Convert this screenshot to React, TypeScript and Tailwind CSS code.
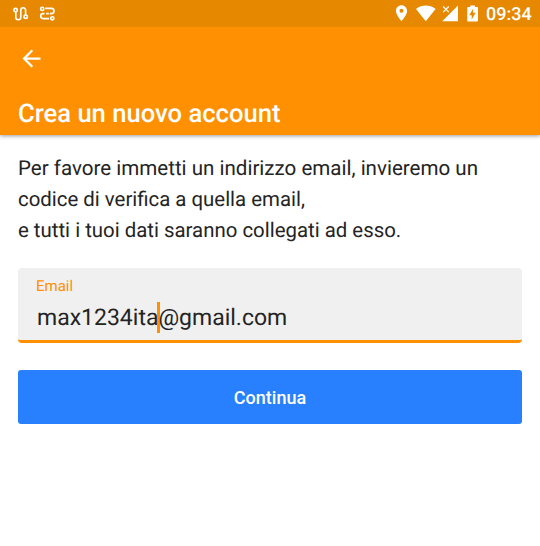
function StatusBar() {
  return (
    <div className="flex h-[27px] items-start bg-[#e68900]">
      <svg width="60" height="27" viewBox="0 0 60 27" fill="none" stroke="white" strokeWidth="1.6">
        <circle cx="15.6" cy="10.1" r="1.7" />
        <path d="M15.8 11.8V17.3a2.5 2.5 0 0 0 5 0V10.2a2.4 2.4 0 0 1 4.8 0V15" />
        <circle cx="25.7" cy="16.7" r="1.7" />
        <circle cx="42.2" cy="8.9" r="1.6" />
        <path d="M45.2 8.4h6.2a2.6 2.6 0 0 1 0 5.2h-1.6M48.8 13.6h-2.6M44.6 13.6h-1.4a2.5 2.5 0 0 0 0 5h6" />
        <circle cx="52.3" cy="18.3" r="1.6" />
      </svg>
      <svg className="ml-auto" width="96" height="27" viewBox="390 0 96 27" fill="white">
        <path fillRule="evenodd" d="M401.5 5.2c-3.1 0-5.6 2.5-5.6 5.6 0 4.2 5.6 10.4 5.6 10.4s5.6-6.2 5.6-10.4c0-3.1-2.5-5.6-5.6-5.6zm0 7.6a2 2 0 1 1 0-4 2 2 0 0 1 0 4z" />
        <path d="M425.8 21.2L416 8.9c.5-.4 4.1-3.4 9.8-3.4s9.3 3 9.8 3.4z" />
        <path d="M458 5.6V21.3H442.2L450 13.5V13.4z" />
        <path d="M443.2 6.5l5.5 5.6m0-5.6l-5.5 5.6" stroke="white" strokeWidth="1.2" />
        <path fillRule="evenodd" d="M468.2 7h2.1V5.4h4.6V7h2.1q1 0 1 1v12.5q0 1-1 1h-8.8q-1 0-1-1V8q0-1 1-1zm4.9 1.8l-3.9 6.5h2.5v4.2l4-6.8h-2.6z" />
      </svg>
      <span className="mr-[9px] w-[45px] whitespace-nowrap text-[18px] font-medium leading-[29px] text-white">09:34</span>
    </div>
  );
}

export default function App() {
  return (
    <div className="flex h-[546px] w-[540px] flex-col overflow-hidden bg-white font-[Roboto,sans-serif] text-[#242424] [text-rendering:geometricPrecision]">
      <header className="h-[135px] shrink-0 bg-[#ff9001] shadow-[0_1px_4px_rgba(0,0,0,0.4)]">
        <StatusBar />
        <button aria-label="Indietro" className="ml-[18px] mt-[18px] block size-[27px]">
          <svg width="27" height="27" viewBox="0 0 24 24" fill="white">
            <path d="M20 11H7.83l5.59-5.59L12 4l-8 8 8 8 1.41-1.41L7.83 13H20z" />
          </svg>
        </button>
        <h1 className="ml-[18px] mt-[28px] whitespace-nowrap text-[25.6px] font-medium leading-[28px] text-white">Crea un nuovo account</h1>
      </header>
      <main className="px-[18px] pt-[19px]">
        <p className="whitespace-nowrap text-[20.4px] leading-[31px]">
          <span className="block text-[20.55px]">Per favore immetti un indirizzo email, invieremo un</span>
          <span className="-mt-px block">codice di verifica a quella email,</span>
          <span className="block">e tutti i tuoi dati saranno collegati ad esso.</span>
        </p>
        <div className="mt-[22px] h-[75px] rounded-[4px] border-b-[3px] border-[#ff9001] bg-[#f0f0f0] px-[18px] pt-[9px]">
          <label className="block text-[15px] leading-[19px] text-[#ff9001]">Email</label>
          <div className="ml-px mt-[6px] flex h-[32px] items-center whitespace-nowrap text-[23px] leading-[32px]">
            <span>max1234ita</span>
            <span className="-mx-[1.5px] mb-[2px] h-[31px] w-[3px] bg-[#ff9001]" />
            <span>@gmail.com</span>
          </div>
        </div>
        <button className="mt-[27px] block h-[54px] w-full rounded-[3px] bg-[#2980ff] text-[18px] font-medium text-white">Continua</button>
      </main>
    </div>
  );
}
